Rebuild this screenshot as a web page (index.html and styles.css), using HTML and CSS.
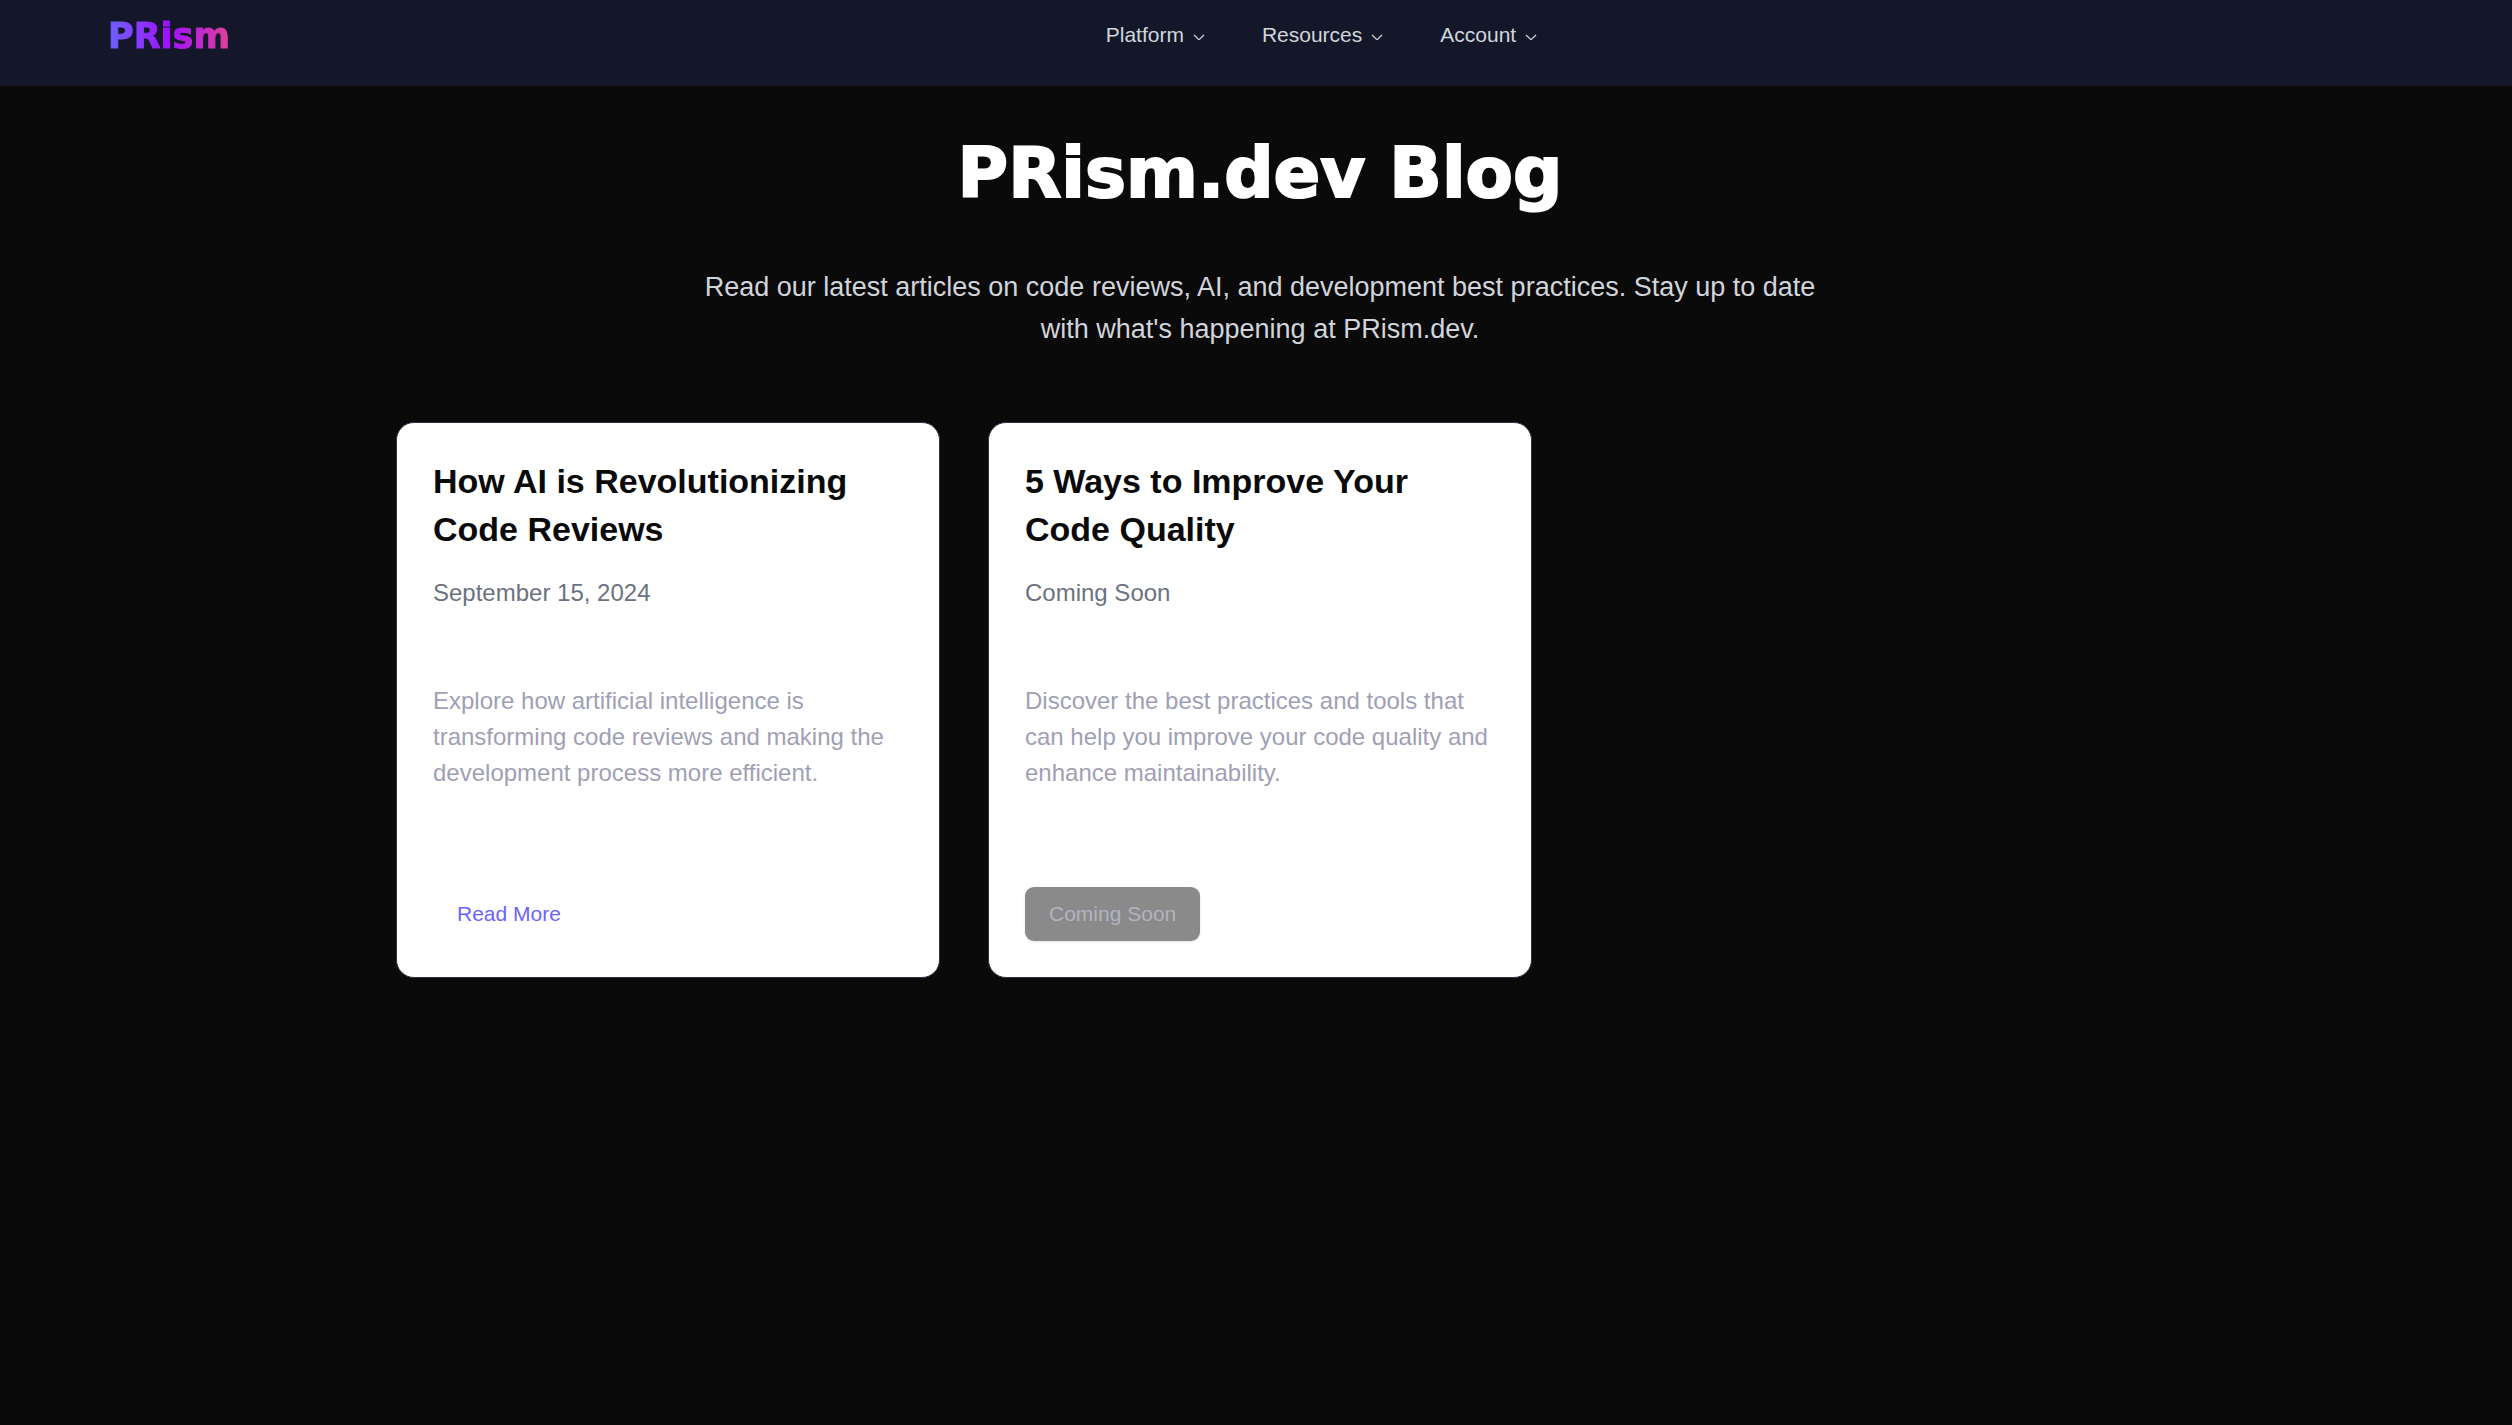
FILE: index.html
```html
<!DOCTYPE html>
<html lang="en">
<head>
<meta charset="utf-8">
<meta name="viewport" content="width=device-width, initial-scale=1">
<title>PRism.dev Blog</title>
<link rel="stylesheet" href="styles.css">
</head>
<body>
<header class="site-header">
  <a class="logo" href="#">PRism</a>
  <nav class="site-nav" aria-label="Main">
    <button class="nav-button" type="button">Platform
      <svg class="chevron" viewBox="0 0 18 18" aria-hidden="true"><path d="M4 7l4.600 4.400q.4.4.8 0L14 7"/></svg>
    </button>
    <button class="nav-button" type="button">Resources
      <svg class="chevron" viewBox="0 0 18 18" aria-hidden="true"><path d="M4 7l4.600 4.400q.4.4.8 0L14 7"/></svg>
    </button>
    <button class="nav-button" type="button">Account
      <svg class="chevron" viewBox="0 0 18 18" aria-hidden="true"><path d="M4 7l4.600 4.400q.4.4.8 0L14 7"/></svg>
    </button>
  </nav>
  <span></span>
</header>
<main class="page">
  <h1 class="page-title">PRism.dev Blog</h1>
  <p class="intro">Read our latest articles on code reviews, AI, and development best practices. Stay up to date with what's happening at PRism.dev.</p>
  <div class="posts">
    <article class="card">
      <h2 class="card-title">How AI is Revolutionizing Code Reviews</h2>
      <p class="card-date">September 15, 2024</p>
      <p class="card-text">Explore how artificial intelligence is transforming code reviews and making the development process more efficient.</p>
      <a class="button button-link" href="#">Read More</a>
    </article>
    <article class="card">
      <h2 class="card-title">5 Ways to Improve Your Code Quality</h2>
      <p class="card-date">Coming Soon</p>
      <p class="card-text">Discover the best practices and tools that can help you improve your code quality and enhance maintainability.</p>
      <button class="button button-disabled" type="button" disabled>Coming Soon</button>
    </article>
  </div>
</main>
</body>
</html>
```
FILE: styles.css
```css
* {
  box-sizing: border-box;
}

body {
  margin: 0;
  background: #0a0a0a;
  color: #d1d5db;
  font-family: "Liberation Sans", Arial, sans-serif;
  font-size: 24px;
  line-height: 36px;
}

h1, h2, p {
  margin: 0;
}

.site-header {
  display: flex;
  justify-content: space-between;
  align-items: flex-start;
  padding: 8px 96px 22px 108px;
  background: #141729;
}

.logo {
  background: linear-gradient(90deg, #6c63ff, #a010ff 50%, #e0409a);
  background-clip: text;
  -webkit-background-clip: text;
  color: transparent;
  font-family: "Arial Black", "DejaVu Sans", sans-serif;
  font-size: 35px;
  font-weight: 900;
  line-height: 56px;
  text-decoration: none;
  -webkit-text-stroke: 1px transparent;
}

.site-nav {
  display: flex;
  flex-wrap: wrap;
  gap: 6px;
}

.nav-button {
  display: flex;
  align-items: center;
  gap: 6px;
  padding: 12px 24px;
  border: 0;
  background: none;
  color: #d1d5db;
  font: inherit;
  font-size: 21px;
  line-height: 30px;
}

.chevron {
  width: 18px;
  height: 18px;
  margin-top: 3px;
  fill: none;
  stroke: currentColor;
  stroke-width: 1.300;
}

.page {
  max-width: 1736px;
  margin: 0 auto;
  padding: 49px 0 48px 8px;
}

.page-title {
  color: #fff;
  font-family: "Arial Black", "DejaVu Sans", sans-serif;
  font-size: 69px;
  font-weight: 900;
  line-height: 76px;
  text-align: center;
  -webkit-text-stroke: 2px #fff;
}

.intro {
  max-width: 1152px;
  margin: 55px auto 72px;
  font-size: 27px;
  line-height: 42px;
  text-align: center;
}

.posts {
  display: grid;
  grid-template-columns: repeat(auto-fill, minmax(min(100%, 480px), 1fr));
  gap: 48px;
}

.card {
  display: flex;
  flex-direction: column;
  align-items: flex-start;
  padding: 34px 36px 36px;
  border: 1px solid #2f3247;
  border-radius: 18px;
  background: #fff;
}

.card-title {
  color: #0a0a0a;
  font-size: 34px;
  line-height: 48px;
}

.card-date {
  margin-top: 22px;
  color: #6b7280;
}

.card-text {
  margin: 72px 0 96px;
  color: #a0a0b5;
}

.button {
  margin-top: auto;
  padding: 12px 24px;
  border: 0;
  border-radius: 9px;
  font: inherit;
  font-size: 21px;
  line-height: 30px;
  text-decoration: none;
}

.button-link {
  color: #6c63ff;
}

.button-disabled {
  background: #8a8a8a;
  color: #b3b3c0;
  box-shadow: 0 1px 3px rgba(0, 0, 0, 0.1);
}
```
